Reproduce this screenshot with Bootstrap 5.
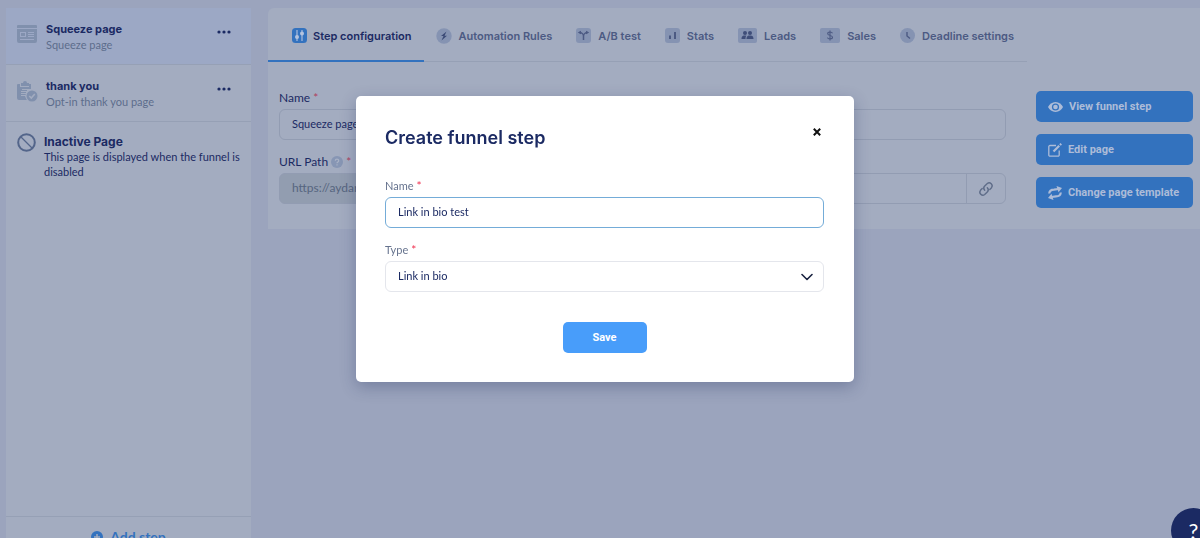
<!DOCTYPE html>
<html lang="en">
<head>
<meta charset="utf-8">
<meta name="viewport" content="width=device-width, initial-scale=1">
<title>Funnel steps</title>
<link href="https://cdn.jsdelivr.net/npm/bootstrap@5.3.0/dist/css/bootstrap.min.css" rel="stylesheet">
<style>
:root{--page:#9ba4bd;--panel:#a3acc0;--line:#96a0b5;--navy:#1b2a63;--muted:#5d6d8c;--tab:#4c5a83;--blue:#3372be}
body{background:var(--page);color:var(--navy);font-family:Lato,"Liberation Sans",sans-serif;font-size:11px;line-height:15px;overflow:hidden}
svg{display:block;flex-shrink:0}
.shell{gap:17px;padding:8px 0 0 6px}
.steps{width:245px;height:calc(100vh + 10px);background:var(--panel)}
.step-row{height:57px;padding:14px 20px 0 11px;border-bottom:1px solid var(--line);gap:8px}
.step-row.current{background:#9ca8c5}
.step-icon{width:21px;padding-top:2px}
.step-title{font:700 11px/15px Inter,sans-serif;margin:0}
.off-row .step-title{font-size:12px}
.step-kind{color:var(--muted)}
.dots{color:var(--navy);padding:8px 0}
.off-row{padding:12px 10px 0 11px;gap:8px}
.off-row svg{margin-top:-1px}
.add-bar{height:40px;border-top:1px solid var(--line)}
.add-bar button{color:var(--blue);font-size:14px;font-weight:700;line-height:16px;gap:7px}
.panel{background:var(--panel);border-radius:6px 0 0 0;padding-bottom:21px;min-width:0}
.tabs{border-bottom:1px solid var(--line);height:54px}
.tabs .nav-link{font:600 11px/16px Inter,sans-serif;color:var(--tab);padding:3px 12px 0;gap:7px;height:54px;white-space:nowrap;border-bottom:2px solid transparent}
.tabs .nav-link.active{color:var(--navy);padding-left:24px;gap:6px;border-bottom-color:var(--blue)}
.page-form{padding:28px 21px 0 11px}
.form-label{margin:0 0 3px;font-size:12px;line-height:16px;gap:3px}
.field-gap{margin-bottom:14px}
.req{color:#b0405f;font-size:12px}
.form-control,.form-select{font-size:11px;line-height:17px;height:31px;padding:5px 12px 7px;border-radius:6px;color:var(--navy)}
.page-form .form-control,.page-form .btn,.page-form .input-group-text{background:transparent;border:1px solid #929cb2}
.page-form .form-control{color:var(--navy)}
.page-form .input-group-text{font-size:12px;line-height:17px;width:150px;padding:5px 12px 7px;color:#56657f;background:#929db0;border-radius:6px}
.page-form .btn{width:40px;padding:0;border-radius:6px}
.actions{width:157px;margin:83px 7px 0 9px;gap:12px}
.actions .btn{background:var(--blue);color:#adbcd8;border:0;height:31px;padding:0 12px;border-radius:5px;font:700 11px/16px Roboto,sans-serif;gap:6px;white-space:nowrap}
.modal{padding-left:10px}
.modal-dialog{max-width:498px;margin:96px auto 0}
.modal-content{border:0;border-radius:5px;padding:30px 30px 29px 29px;box-shadow:0 5px 16px rgba(30,42,90,.3);color:var(--navy)}
.modal-head{margin-bottom:28px}
.modal-title{font:600 18px/24px Inter,sans-serif;margin:0}
.close-x{padding:3px;margin:-1px 0 0;color:#111}
.modal .form-label{font-size:11px;color:#66738e}
.modal .req{color:#f0304f}
.modal .form-control,.modal .form-control:focus{border:1px solid #74acd8;box-shadow:none;color:var(--navy)}
.modal .form-select{border:1px solid #e4e6ec;background-image:url("data:image/svg+xml,%3Csvg xmlns='http://www.w3.org/2000/svg' viewBox='0 0 12 12'%3E%3Cpath d='M1 3.5l5 5 5-5' fill='none' stroke='%231a2340' stroke-width='1.6' stroke-linecap='round' stroke-linejoin='round'/%3E%3C/svg%3E");background-size:12px;background-position:right 10px center}
.save{background:#489dfa;color:#fff;width:84px;height:31px;padding:0;margin-top:30px;border:0;border-radius:5px;font:700 11px/16px Roboto,sans-serif}
.help{position:fixed;right:-16px;bottom:-15px;width:45px;height:45px;background:#1b2a63;color:#fff;border:0;border-radius:50%;font:22px/43px Lato,sans-serif;padding:0}
</style>
</head>
<body>
<div class="shell d-flex align-items-start">
  <aside class="steps d-flex flex-column flex-shrink-0">
    <div class="step-row current d-flex">
      <div class="step-icon"><svg width="20" height="20" viewBox="0 0 20 20" fill="#8090ad"><path d="M1 1h18a1 1 0 0 1 1 1v2H0V2a1 1 0 0 1 1-1z"/><path fill-rule="evenodd" d="M0 5h20v12a2 2 0 0 1-2 2H2a2 2 0 0 1-2-2zm3 3v5h6V8zm8 0v1h6V8zm0 2v1h6v-1zm0 2v1h6v-1zM3 15v1h14v-1z"/><path d="M4 9h4v3H4z"/></svg></div>
      <div class="flex-grow-1"><h2 class="step-title">Squeeze page</h2><div class="step-kind">Squeeze page</div></div>
      <button class="dots btn border-0 align-self-start" aria-label="Squeeze page menu"><svg width="14" height="4" viewBox="0 0 14 4" fill="currentColor"><circle cx="2" cy="2" r="1.6"/><circle cx="7" cy="2" r="1.6"/><circle cx="12" cy="2" r="1.6"/></svg></button>
    </div>
    <div class="step-row d-flex">
      <div class="step-icon"><svg width="21" height="21" viewBox="0 0 21 21"><path fill="#8090ad" d="M1 3h2v3h9V3h2v5H5v1h5v1H4v1h5v1H4v1h5v1H4v1h4l2 4H2a2 2 0 0 1-2-2V4a1 1 0 0 1 1-1zM4 2h2a2 2 0 0 1 4 0h2v3H4z"/><circle cx="15" cy="15" r="6.5" fill="#a3acc0"/><circle cx="15" cy="15" r="5.500" fill="#8090ad"/><path d="M12.300 15l2 2 3.500-4" fill="none" stroke="#a3acc0" stroke-width="1.600"/></svg></div>
      <div class="flex-grow-1"><h2 class="step-title">thank you</h2><div class="step-kind">Opt-in thank you page</div></div>
      <button class="dots btn border-0 align-self-start" aria-label="thank you menu"><svg width="14" height="4" viewBox="0 0 14 4" fill="currentColor"><circle cx="2" cy="2" r="1.6"/><circle cx="7" cy="2" r="1.6"/><circle cx="12" cy="2" r="1.6"/></svg></button>
    </div>
    <div class="off-row d-flex flex-grow-1">
      <svg width="19" height="19" viewBox="0 0 19 19" fill="none" stroke="#53658a"><circle cx="9.500" cy="9.500" r="8.300" stroke-width="2"/><path d="M4 4l11 11" stroke-width="1.200"/></svg>
      <div><h2 class="step-title">Inactive Page</h2><div>This page is displayed when the funnel is disabled</div></div>
    </div>
    <div class="add-bar d-flex justify-content-center align-items-center">
      <button class="btn p-0 border-0 d-flex align-items-center"><svg width="12" height="12" viewBox="0 0 12 12"><circle cx="6" cy="6" r="6" fill="#3372be"/><path d="M6 3v6M3 6h6" stroke="#a3acc0" stroke-width="1.500"/></svg>Add step</button>
    </div>
  </aside>

  <main class="panel d-flex flex-grow-1 align-items-start">
    <div class="flex-grow-1">
      <nav class="tabs nav flex-nowrap">
        <a class="nav-link active d-flex align-items-center" href="#"><svg width="15" height="15" viewBox="0 0 15 15"><rect width="15" height="15" rx="3.500" fill="#3372be"/><path d="M5 2v11M10 2v11" stroke="#a9bbdc" stroke-width="1.200"/><circle cx="5" cy="9" r="2" fill="#b4c3de"/><circle cx="10" cy="5.500" r="2" fill="#b4c3de"/></svg>Step configuration</a>
        <a class="nav-link d-flex align-items-center" href="#"><svg width="16" height="16" viewBox="0 0 16 16"><circle cx="8" cy="8" r="7.700" fill="#8593b2"/><path d="M10.500 3.500L5 8h2.500L5.500 12.500 11 7.700H8.500z" fill="#3c4b77"/></svg>Automation Rules</a>
        <a class="nav-link d-flex align-items-center" href="#"><svg width="15" height="15" viewBox="0 0 15 15"><rect width="15" height="15" rx="3" fill="#8593b2"/><path d="M7.500 12V8c0-2-2-3.500-4-3.500M7.500 8c0-2 2-3.500 4-3.500" fill="none" stroke="#4c5a83" stroke-width="1.500"/><path d="M1.800 4.500L5 2.800v3.400zM13.200 4.500L10 2.800v3.400z" fill="#4c5a83"/></svg>A/B test</a>
        <a class="nav-link d-flex align-items-center" href="#"><svg width="15" height="15" viewBox="0 0 15 15"><rect width="15" height="15" rx="3" fill="#8593b2"/><path d="M5 7.500V11M10 4v7" stroke="#4c5a83" stroke-width="2"/></svg>Stats</a>
        <a class="nav-link d-flex align-items-center" href="#"><svg width="19" height="15" viewBox="0 0 19 15"><rect width="19" height="15" rx="2" fill="#8593b2"/><g fill="#3f4e79"><circle cx="7" cy="5" r="2"/><circle cx="12" cy="5" r="2"/><path d="M3.500 11c0-3 1.500-3.500 3.500-3.500 1 0 1.500.3 1.500.3C7.700 8.500 7.500 9.500 7.500 11zM8.500 11c0-3 1.500-3.500 3.500-3.500s3.500.5 3.500 3.500z"/></g></svg>Leads</a>
        <a class="nav-link d-flex align-items-center" href="#"><svg width="20" height="15" viewBox="0 0 20 15"><rect width="20" height="15" rx="2" fill="#8593b2"/><path d="M12.500 5.200C12 4.200 11 4 10 4c-1.300 0-2.300.6-2.300 1.700C7.700 8 12.500 7 12.500 9.300c0 1.100-1.100 1.700-2.500 1.700-1.200 0-2.200-.4-2.600-1.400M10 2.500v10" fill="none" stroke="#4c5a83" stroke-width="1.100"/></svg>Sales</a>
        <a class="nav-link d-flex align-items-center" href="#"><svg width="15" height="15" viewBox="0 0 15 15"><circle cx="7.500" cy="7.500" r="7.500" fill="#8593b2"/><path d="M7 4v4l3 2.500" fill="none" stroke="#4c5a83" stroke-width="1.400"/></svg>Deadline settings</a>
      </nav>
      <form class="page-form">
        <label class="form-label d-flex" for="pageName">Name<span class="req">*</span></label>
        <input class="form-control field-gap" id="pageName" value="Squeeze page">
        <label class="form-label d-flex align-items-center" for="urlPath">URL Path<svg width="12" height="12" viewBox="0 0 12 12"><circle cx="6" cy="6" r="6" fill="#8796b4"/><path d="M4.300 4.700c0-2 3.400-2 3.400 0C7.700 6 6 6 6 7.200M6 8.300v1.200" fill="none" stroke="#a9b2c6" stroke-width="1.200"/></svg><span class="req">*</span></label>
        <div class="input-group flex-nowrap">
          <span class="input-group-text">https://aydar.systeme.io/</span>
          <input class="form-control" id="urlPath">
          <button class="btn d-flex align-items-center justify-content-center" type="button" aria-label="Copy link"><svg width="16" height="16" viewBox="0 0 16 16" fill="none" stroke="#5f6d89" stroke-width="1.400" stroke-linecap="round"><path d="M6.700 9.300a3 3 0 0 1 0-4.200l2.600-2.600a3 3 0 0 1 4.200 4.200L11.800 8.400"/><path d="M9.300 6.700a3 3 0 0 1 0 4.200l-2.600 2.600a3 3 0 0 1-4.200-4.200l1.700-1.700"/></svg></button>
        </div>
      </form>
    </div>
    <div class="actions d-flex flex-column flex-shrink-0">
      <button class="btn d-flex align-items-center"><svg width="15" height="12" viewBox="0 0 15 12"><path fill="#adbcd8" d="M7.500 1C4 1 1.500 3.300 0 6c1.500 2.700 4 5 7.500 5S13.500 8.700 15 6c-1.500-2.700-4-5-7.500-5z"/><circle cx="7.500" cy="6" r="3.600" fill="#3372be"/><circle cx="7.500" cy="6" r="2.300" fill="#adbcd8"/></svg>View funnel step</button>
      <button class="btn d-flex align-items-center"><svg width="14" height="14" viewBox="0 0 14 14" fill="none" stroke="#adbcd8"><path d="M8 2.500H2a1.200 1.200 0 0 0-1.200 1.200V12A1.200 1.200 0 0 0 2 13.200h8A1.200 1.200 0 0 0 11.200 12V7.500" stroke-width="1.300"/><path d="M5.500 8.500l5.700-5.700M12 2l1.200-1.200" stroke-width="2.200"/></svg>Edit page</button>
      <button class="btn d-flex align-items-center"><svg width="14" height="14" viewBox="0 0 14 14"><g fill="none" stroke="#adbcd8" stroke-width="2.200"><path d="M1.200 7.500C1.500 4.500 4 3.600 6 3.600L10.500 3"/><path d="M12.800 6.500c-.3 3-2.800 3.900-4.800 3.900L3.500 11"/></g><path fill="#adbcd8" d="M8.500 0L14 2 10.500 6.200zM5.500 14L0 12l3.500-4.200z"/></svg>Change page template</button>
    </div>
  </main>
</div>

<div class="modal d-block" tabindex="-1" role="dialog" aria-labelledby="stepTitle">
  <div class="modal-dialog">
    <form class="modal-content">
      <div class="modal-head d-flex justify-content-between align-items-start">
        <h1 class="modal-title" id="stepTitle">Create funnel step</h1>
        <button class="btn close-x border-0" type="button" aria-label="Close"><svg width="8" height="8" viewBox="0 0 8 8"><path d="M.8.8l6.400 6.400M7.200.8L.8 7.200" stroke="currentColor" stroke-width="2"/></svg></button>
      </div>
      <label class="form-label d-flex" for="stepName">Name<span class="req">*</span></label>
      <input class="form-control field-gap" id="stepName" value="Link in bio test">
      <label class="form-label d-flex" for="stepType">Type<span class="req">*</span></label>
      <select class="form-select" id="stepType"><option>Link in bio</option></select>
      <button class="btn save align-self-center" type="button">Save</button>
    </form>
  </div>
</div>
<button class="help" aria-label="Help">?</button>
<script src="https://cdn.jsdelivr.net/npm/bootstrap@5.3.0/dist/js/bootstrap.bundle.min.js"></script>
<script>
const stepName=document.getElementById('stepName');
stepName.focus();
stepName.setSelectionRange(stepName.value.length,stepName.value.length);
</script>
</body>
</html>
